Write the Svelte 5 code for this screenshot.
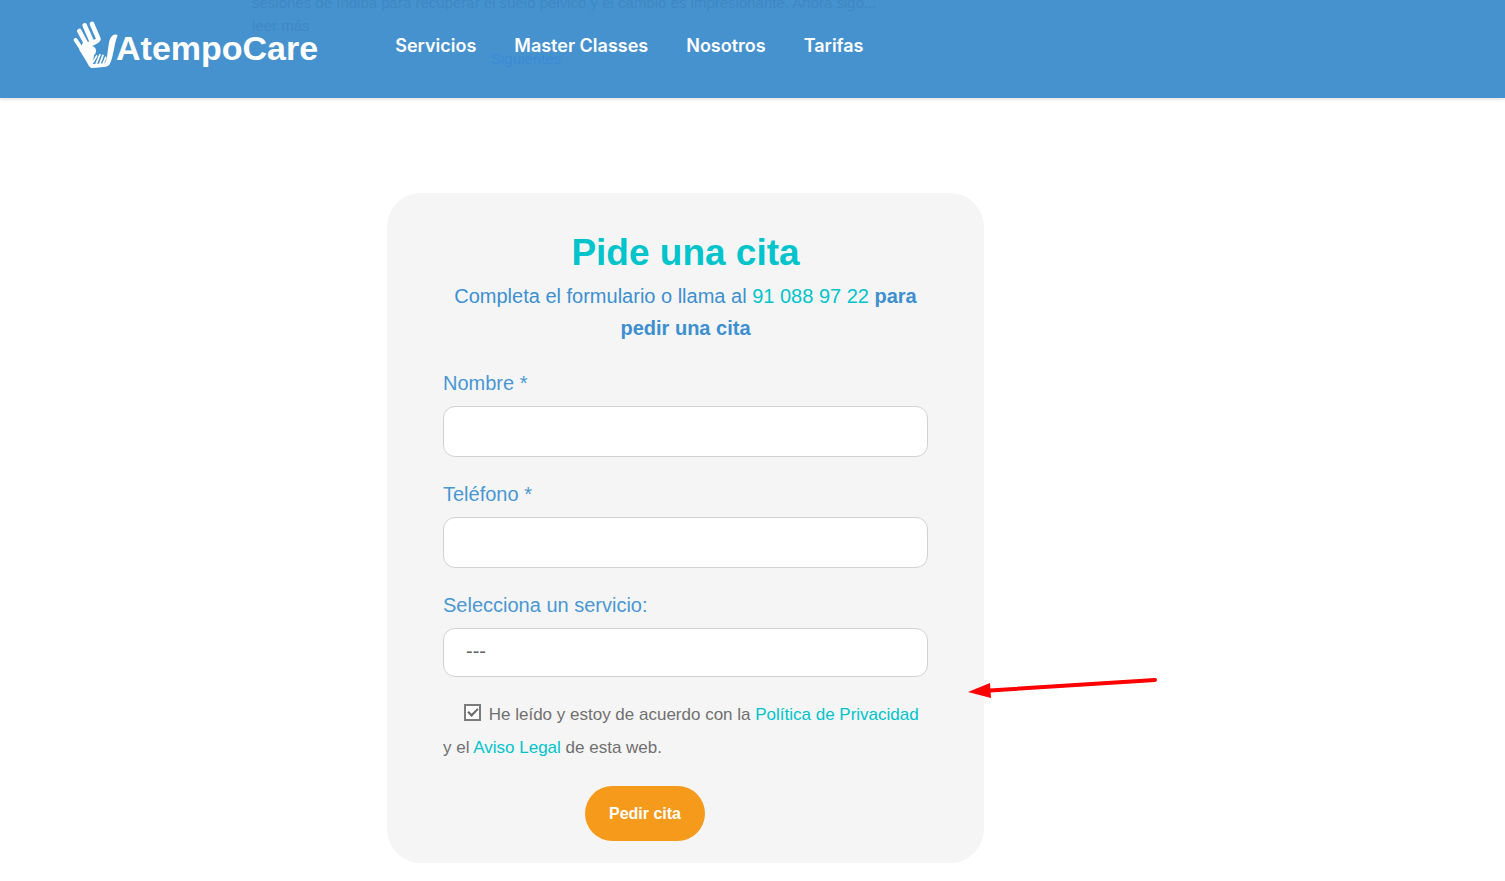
<script lang="ts">
  const links = ['Servicios', 'Master Classes', 'Nosotros', 'Tarifas']

  let nombre = ''
  let telefono = ''
  let servicio = ''
  let acepta = true
</script>

<header class="topbar">
  <div class="behind" aria-hidden="true">
    <p>sesiones de Indiba para recuperar el suelo pélvico y el cambio es impresionante. Ahora sigo...</p>
    <p>leer más</p>
    <p class="next">Siguientes</p>
  </div>
  <a class="logo" href="#inicio">
    <svg viewBox="0 0 141 150" width="47" height="50" aria-hidden="true">
      <g fill="none" stroke="#fff" stroke-linecap="round">
        <path stroke-width="12" d="M11 60 L36 98" />
        <path stroke-width="14" d="M22 33 L46 78" />
        <path stroke-width="14" d="M38 16 L60 66" />
        <path stroke-width="14" d="M60 12 L79 56" />
      </g>
      <path fill="#fff" d="M34 66 C46 70 60 62 82 52 L86 60 C80 72 66 74 60 79 C74 80 76 98 66 106 L62 132 L98 130 C108 112 106 92 111 68 C115 46 128 40 137 45 C126 72 126 102 116 126 C112 138 106 140 96 141 L62 144 C52 144 48 132 42 122 L22 90 Z" />
      <g fill="none" stroke="#fff" stroke-width="5" stroke-linecap="round">
        <path d="M62 128 L74 108 M73 130 L84 104 M84 130 L93 106 M94 130 L101 112" />
      </g>
    </svg>
    <span>AtempoCare</span>
  </a>
  <nav>
    {#each links as link}
      <a href="#{link}">{link}</a>
    {/each}
  </nav>
</header>

<main>
  <section class="card">
    <h1>Pide una cita</h1>
    <p class="intro">
      Completa el formulario o llama al <a href="tel:910889722">91 088 97 22</a> <strong>para pedir una cita</strong>
    </p>

    <form on:submit|preventDefault>
      <div class="field">
        <label for="nombre">Nombre *</label>
        <input id="nombre" type="text" bind:value={nombre} />
      </div>
      <div class="field">
        <label for="telefono">Teléfono *</label>
        <input id="telefono" type="tel" bind:value={telefono} />
      </div>
      <div class="field">
        <label for="servicio">Selecciona un servicio:</label>
        <select id="servicio" bind:value={servicio}>
          <option value="">---</option>
        </select>
      </div>

      <div class="privacy">
        <input id="acepta" type="checkbox" bind:checked={acepta} />
        <label for="acepta">He leído y estoy de acuerdo con la <a href="#privacidad">Política de Privacidad</a> y el <a href="#aviso">Aviso Legal</a> de esta web.</label>
      </div>

      <button type="submit">Pedir cita</button>
    </form>

    <svg class="arrow" viewBox="0 0 190 22" width="190" height="22" aria-hidden="true">
      <path d="M22 12.500 L187 2" stroke="#f00" stroke-width="4" stroke-linecap="round" />
      <path d="M0 14 L22 5 L23 20 Z" fill="#f00" />
    </svg>
  </section>
</main>

<style>
  :global(body) {
    margin: 0;
    background: #fff;
    font-family: 'Liberation Sans', Arial, sans-serif;
  }

  a {
    color: #00c4cc;
    text-decoration: none;
  }

  .topbar {
    position: relative;
    height: 98px;
    padding-left: 72px;
    display: flex;
    align-items: flex-start;
    overflow: hidden;
    background: #4692ce;
    box-shadow: 0 1px 4px rgba(0, 0, 0, 0.15);
  }

  .behind {
    position: absolute;
    top: -9px;
    left: 252px;
    font-size: 15px;
    line-height: 23px;
    color: #3f88c4;
  }

  .behind p {
    margin: 0;
    white-space: nowrap;
  }

  .behind .next {
    margin: 10px 0 0 239px;
    color: #3c8ad6;
  }

  .logo {
    position: relative;
    display: flex;
    padding-top: 20px;
    color: #fff;
  }

  .logo span {
    margin-left: -3px;
    font-size: 34px;
    font-weight: 700;
    line-height: 56px;
  }

  nav {
    position: relative;
    display: flex;
    gap: 38px;
    margin-left: 77px;
    padding-top: 34px;
  }

  nav a {
    color: #fff;
    font-family: Inter, sans-serif;
    font-size: 18px;
    font-weight: 600;
    line-height: 24px;
  }

  main {
    padding: 95px 24px 18px 387px;
  }

  .card {
    position: relative;
    box-sizing: border-box;
    max-width: 597px;
    padding: 39px 56px 22px;
    border-radius: 34px;
    background: #f5f5f5;
  }

  h1 {
    margin: 0;
    color: #00c4cc;
    font-size: 37px;
    font-weight: 700;
    line-height: 42px;
    text-align: center;
  }

  .intro {
    margin: 6px 0 23px;
    color: #3d8fcf;
    font-size: 20px;
    line-height: 32px;
    text-align: center;
  }

  .intro strong {
    font-weight: 700;
  }

  .field {
    display: flex;
    flex-direction: column;
    gap: 7px;
    margin-bottom: 21px;
  }

  .field label {
    color: #4a97d2;
    font-size: 20px;
    line-height: 32px;
  }

  .field input,
  .field select {
    box-sizing: border-box;
    width: 100%;
    height: 51px;
    padding: 0 22px;
    border: 1px solid #d2d2d2;
    border-radius: 12px;
    background: #fff;
    color: #666;
    font-family: 'Liberation Sans', Arial, sans-serif;
    font-size: 20px;
  }

  .field select {
    height: 49px;
    padding-bottom: 4px;
    appearance: none;
  }

  .privacy {
    color: #707070;
    font-size: 17px;
    line-height: 33px;
  }

  .privacy input {
    position: relative;
    width: 17px;
    height: 17px;
    margin: 0 3px 0 21px;
    border: 2px solid #7c7c7c;
    box-sizing: border-box;
    background: #fff;
    appearance: none;
    vertical-align: -1px;
  }

  .privacy input:checked::after {
    content: '';
    position: absolute;
    top: 2px;
    left: 2px;
    width: 8px;
    height: 4px;
    border-left: 2px solid #666;
    border-bottom: 2px solid #666;
    transform: rotate(-45deg);
  }

  button {
    display: block;
    width: 120px;
    height: 55px;
    margin: 22px 0 0 142px;
    border: none;
    border-radius: 28px;
    background: #f59a1b;
    color: #fff;
    font-family: 'Liberation Sans', Arial, sans-serif;
    font-size: 16px;
    font-weight: 700;
    cursor: pointer;
  }

  .arrow {
    position: absolute;
    top: 485px;
    right: -174px;
  }
</style>
